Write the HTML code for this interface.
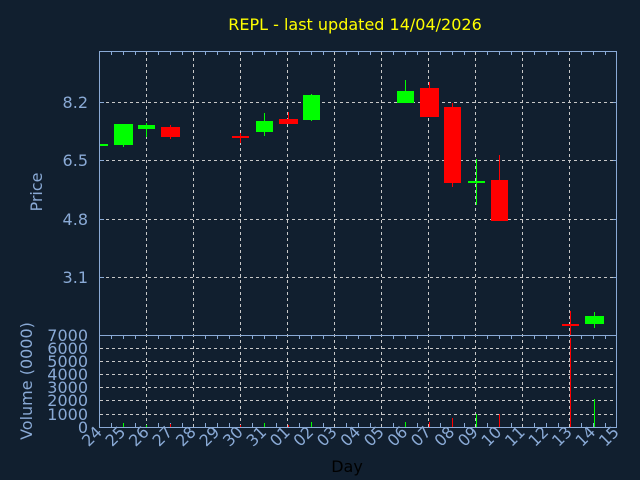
<!DOCTYPE html>
<html><head><style>
html,body{margin:0;padding:0;background:#111f2f;}
svg{display:block}
text{font-family:"DejaVu Sans","Liberation Sans",sans-serif;}
</style></head><body>
<svg width="640" height="480" viewBox="0 0 640 480" xmlns="http://www.w3.org/2000/svg">
<rect width="640" height="480" fill="#111f2f"/>
<text x="355" y="30" fill="#ffff00" font-size="16" text-anchor="middle">REPL - last updated 14/04/2026</text>
<g stroke="#c8c8c8" stroke-width="1" stroke-dasharray="3,3">
<line x1="146.5" y1="52" x2="146.5" y2="427"/><line x1="193.5" y1="52" x2="193.5" y2="427"/>
<line x1="240.5" y1="52" x2="240.5" y2="427"/><line x1="287.5" y1="52" x2="287.5" y2="427"/>
<line x1="334.5" y1="52" x2="334.5" y2="427"/><line x1="381.5" y1="52" x2="381.5" y2="427"/>
<line x1="428.5" y1="52" x2="428.5" y2="427"/><line x1="475.5" y1="52" x2="475.5" y2="427"/>
<line x1="522.5" y1="52" x2="522.5" y2="427"/><line x1="569.5" y1="52" x2="569.5" y2="427"/>
<line x1="100" y1="102.5" x2="617" y2="102.5"/><line x1="100" y1="160.5" x2="617" y2="160.5"/>
<line x1="100" y1="219.5" x2="617" y2="219.5"/><line x1="100" y1="277.5" x2="617" y2="277.5"/>
<line x1="100" y1="348.5" x2="617" y2="348.5"/><line x1="100" y1="361.5" x2="617" y2="361.5"/>
<line x1="100" y1="374.5" x2="617" y2="374.5"/><line x1="100" y1="387.5" x2="617" y2="387.5"/>
<line x1="100" y1="400.5" x2="617" y2="400.5"/><line x1="100" y1="414.5" x2="617" y2="414.5"/>
</g>
<g fill="none" stroke="#8aaad6" stroke-width="1">
<rect x="99.5" y="51.5" width="517" height="376"/>
<line x1="99.5" y1="335.5" x2="616.5" y2="335.5"/>
</g>
<g stroke="#8aaad6" stroke-width="1" id="ticks">
<path d="M111.5 52v3M123.5 52v3M135.5 52v3M158.5 52v3M170.5 52v3M182.5 52v3M205.5 52v3M217.5 52v3M229.5 52v3M252.5 52v3M264.5 52v3M276.5 52v3M299.5 52v3M311.5 52v3M323.5 52v3M346.5 52v3M358.5 52v3M370.5 52v3M393.5 52v3M405.5 52v3M417.5 52v3M440.5 52v3M452.5 52v3M464.5 52v3M487.5 52v3M499.5 52v3M511.5 52v3M534.5 52v3M546.5 52v3M558.5 52v3M581.5 52v3M593.5 52v3M605.5 52v3"/>
<path d="M111.5 336v3M123.5 336v3M135.5 336v3M158.5 336v3M170.5 336v3M182.5 336v3M205.5 336v3M217.5 336v3M229.5 336v3M252.5 336v3M264.5 336v3M276.5 336v3M299.5 336v3M311.5 336v3M323.5 336v3M346.5 336v3M358.5 336v3M370.5 336v3M393.5 336v3M405.5 336v3M417.5 336v3M440.5 336v3M452.5 336v3M464.5 336v3M487.5 336v3M499.5 336v3M511.5 336v3M534.5 336v3M546.5 336v3M558.5 336v3M581.5 336v3M593.5 336v3M605.5 336v3"/>
<path d="M111.5 427v-4M123.5 427v-4M135.5 427v-4M158.5 427v-4M170.5 427v-4M182.5 427v-4M205.5 427v-4M217.5 427v-4M229.5 427v-4M252.5 427v-4M264.5 427v-4M276.5 427v-4M299.5 427v-4M311.5 427v-4M323.5 427v-4M346.5 427v-4M358.5 427v-4M370.5 427v-4M393.5 427v-4M405.5 427v-4M417.5 427v-4M440.5 427v-4M452.5 427v-4M464.5 427v-4M487.5 427v-4M499.5 427v-4M511.5 427v-4M534.5 427v-4M546.5 427v-4M558.5 427v-4M581.5 427v-4M593.5 427v-4M605.5 427v-4"/>
<path d="M100 102.5h4M613 102.5h4M100 160.5h4M613 160.5h4M100 219.5h4M613 219.5h4M100 277.5h4M613 277.5h4"/>
</g>
<!-- candles -->
<g>
<rect x="100" y="144" width="8" height="2" fill="#00ff00"/>
<rect x="123" y="124" width="1" height="23" fill="#00ff00"/><rect x="114" y="124" width="19" height="21" fill="#00ff00"/>
<rect x="146" y="123" width="1" height="14" fill="#00ff00"/><rect x="138" y="125" width="17" height="4" fill="#00ff00"/>
<rect x="170" y="125" width="1" height="14" fill="#ff0000"/><rect x="161" y="127" width="19" height="10" fill="#ff0000"/>
<rect x="240" y="133" width="1" height="10" fill="#ff0000"/><rect x="232" y="136" width="17" height="2" fill="#ff0000"/>
<rect x="264" y="113" width="1" height="23" fill="#00ff00"/><rect x="256" y="121" width="17" height="11" fill="#00ff00"/>
<rect x="288" y="112" width="1" height="12" fill="#ff0000"/><rect x="279" y="119" width="19" height="5" fill="#ff0000"/>
<rect x="311" y="94" width="1" height="27" fill="#00ff00"/><rect x="303" y="95" width="17" height="25" fill="#00ff00"/>
<rect x="405" y="80" width="1" height="23" fill="#00ff00"/><rect x="397" y="91" width="17" height="12" fill="#00ff00"/>
<rect x="429" y="82" width="1" height="35" fill="#ff0000"/><rect x="420" y="88" width="19" height="29" fill="#ff0000"/>
<rect x="452" y="103" width="1" height="84" fill="#ff0000"/><rect x="444" y="107" width="17" height="76" fill="#ff0000"/>
<rect x="476" y="159" width="1" height="46" fill="#00ff00"/><rect x="468" y="181" width="17" height="2" fill="#00ff00"/>
<rect x="499" y="155" width="1" height="66" fill="#ff0000"/><rect x="491" y="180" width="17" height="41" fill="#ff0000"/>
<rect x="570" y="311" width="1" height="24" fill="#ff0000"/><rect x="562" y="324" width="17" height="2" fill="#ff0000"/>
<rect x="594" y="312" width="1" height="16" fill="#00ff00"/><rect x="585" y="316" width="19" height="8" fill="#00ff00"/>
</g>
<!-- volume -->
<g>
<rect x="123" y="423" width="1" height="4" fill="#00ff00"/>
<rect x="146" y="425" width="1" height="2" fill="#00ff00"/>
<rect x="170" y="424" width="1" height="3" fill="#ff0000"/>
<rect x="240" y="425" width="1" height="2" fill="#ff0000"/>
<rect x="264" y="423" width="1" height="4" fill="#00ff00"/>
<rect x="288" y="425" width="1" height="2" fill="#ff0000"/>
<rect x="311" y="422" width="1" height="5" fill="#00ff00"/>
<rect x="405" y="422" width="1" height="5" fill="#00ff00"/>
<rect x="429" y="422" width="1" height="5" fill="#ff0000"/>
<rect x="452" y="418" width="1" height="9" fill="#ff0000"/>
<rect x="476" y="414" width="1" height="13" fill="#00ff00"/>
<rect x="499" y="414" width="1" height="13" fill="#ff0000"/>
<rect x="570" y="338" width="1" height="89" fill="#ff0000"/>
<rect x="594" y="399" width="1" height="28" fill="#00ff00"/>
</g>
<g fill="#8aaad6" font-size="16" text-anchor="end">
<text x="88" y="108">8.2</text><text x="88" y="166">6.5</text>
<text x="88" y="225">4.8</text><text x="88" y="283">3.1</text>
<text x="88" y="341">7000</text><text x="88" y="354">6000</text><text x="88" y="367">5000</text>
<text x="88" y="380">4000</text><text x="88" y="393">3000</text><text x="88" y="406">2000</text>
<text x="88" y="420">1000</text><text x="88" y="433">0</text>
</g>
<text transform="translate(42,192) rotate(-90)" fill="#8aaad6" font-size="16" text-anchor="middle">Price</text>
<text transform="translate(32,381) rotate(-90)" fill="#8aaad6" font-size="16" text-anchor="middle">Volume (0000)</text>
<text x="347" y="472" fill="#000" font-size="16" text-anchor="middle">Day</text>
<g fill="#8aaad6" font-size="16" text-anchor="end">
<text transform="translate(103,433) rotate(-45)">24</text>
<text transform="translate(126.5,433) rotate(-45)">25</text>
<text transform="translate(150,433) rotate(-45)">26</text>
<text transform="translate(173.5,433) rotate(-45)">27</text>
<text transform="translate(197,433) rotate(-45)">28</text>
<text transform="translate(220.5,433) rotate(-45)">29</text>
<text transform="translate(244,433) rotate(-45)">30</text>
<text transform="translate(267.5,433) rotate(-45)">31</text>
<text transform="translate(291,433) rotate(-45)">01</text>
<text transform="translate(314.5,433) rotate(-45)">02</text>
<text transform="translate(338,433) rotate(-45)">03</text>
<text transform="translate(361.5,433) rotate(-45)">04</text>
<text transform="translate(385,433) rotate(-45)">05</text>
<text transform="translate(408.5,433) rotate(-45)">06</text>
<text transform="translate(432,433) rotate(-45)">07</text>
<text transform="translate(455.5,433) rotate(-45)">08</text>
<text transform="translate(479,433) rotate(-45)">09</text>
<text transform="translate(502.5,433) rotate(-45)">10</text>
<text transform="translate(526,433) rotate(-45)">11</text>
<text transform="translate(549.5,433) rotate(-45)">12</text>
<text transform="translate(573,433) rotate(-45)">13</text>
<text transform="translate(596.5,433) rotate(-45)">14</text>
<text transform="translate(620,433) rotate(-45)">15</text>
</g>
</svg>
</body></html>
